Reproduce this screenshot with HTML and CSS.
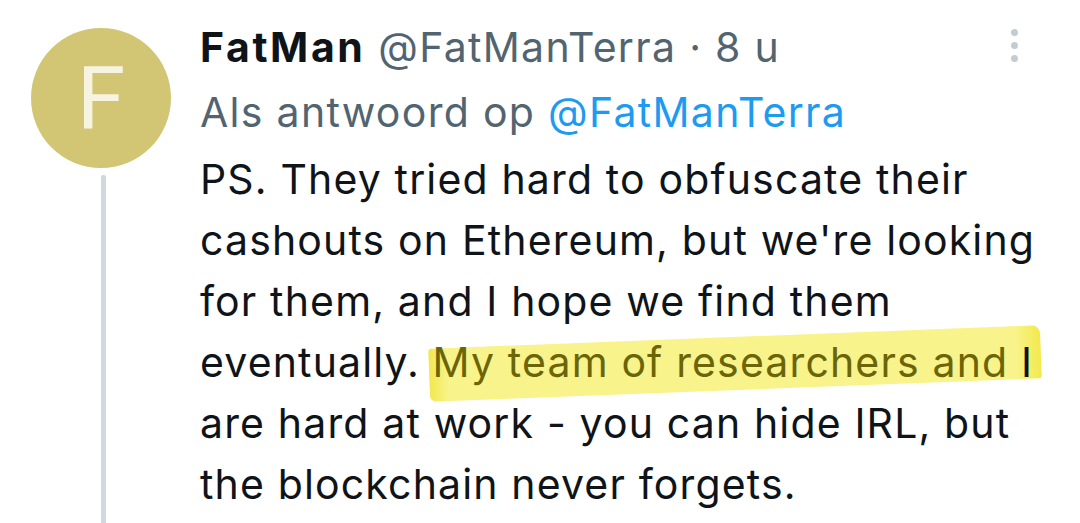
FILE: index.html
```html
<!DOCTYPE html>
<html>
<head>
<meta charset="utf-8">
<link rel="stylesheet" href="styles.css">
</head>
<body>
<div class="tweet">
  <div class="side">
    <div class="avatar">F</div>
    <div class="thread"></div>
  </div>
  <div class="main">
    <div class="head">
      <div class="meta">
        <div class="line1"><span class="name">FatMan</span> <span class="gray">@FatManTerra · 8 u</span></div>
        <div class="line2"><span class="gray">Als antwoord op</span> <span class="link">@FatManTerra</span></div>
      </div>
      <div class="more"><span></span><span></span><span></span></div>
    </div>
    <div class="body">PS. They tried hard to obfuscate their<br>cashouts on Ethereum, but we're looking<br>for them, and I hope we find them<br>eventually. <span class="mark">My team of researchers and</span> I<br>are hard at work - you can hide IRL, but<br>the blockchain never forgets.</div>
  </div>
</div>
</body>
</html>
```

FILE: styles.css
```css
html, body {
  margin: 0;
  padding: 0;
  background: #ffffff;
}
body {
  width: 1080px;
  height: 523px;
  overflow: hidden;
  font-family: Inter, Roboto, "Liberation Sans", sans-serif;
}
.tweet {
  display: flex;
  gap: 29px;
  padding-left: 31px;
  padding-right: 62px;
  height: 523px;
}
.side {
  width: 140px;
  flex: none;
  display: flex;
  flex-direction: column;
  align-items: center;
  padding-top: 28px;
}
.avatar {
  width: 140px;
  height: 140px;
  border-radius: 50%;
  background: #d2c674;
  color: #f6f3e0;
  font-family: Roboto, sans-serif;
  font-size: 88px;
  line-height: 140px;
  text-align: center;
  font-weight: 400;
}
.thread {
  width: 5px;
  flex: 1;
  margin-top: 7px;
  margin-left: 4px;
  background: #cfd9de;
  border-radius: 2px 2px 0 0;
}
.main {
  flex: 1;
  min-width: 0;
  display: flex;
  flex-direction: column;
  padding-top: 15px;
}
.head {
  display: flex;
  justify-content: space-between;
}
.meta {
  font-size: 41px;
  line-height: 65px;
  letter-spacing: 1.3px;
  white-space: nowrap;
}
.name {
  font-weight: 700;
  color: #0f1419;
  letter-spacing: 2.6px;
}
.gray {
  color: #536471;
}
.link {
  color: #1d9bf0;
}
.more {
  display: flex;
  flex-direction: column;
  gap: 6px;
  padding-top: 14px;
}
.more span {
  width: 7px;
  height: 7px;
  border-radius: 50%;
  background: #c2ccd3;
}
.body {
  position: relative;
  z-index: 0;
  margin-top: 4px;
  font-size: 41px;
  line-height: 61px;
  letter-spacing: 1.15px;
  color: #0f1419;
  white-space: nowrap;
}
.mark {
  position: relative;
  color: #6b6508;
}
.mark::before {
  content: "";
  position: absolute;
  left: -4px;
  right: -32px;
  top: 0;
  bottom: -3px;
  background: linear-gradient(to right, #f2e84e 0, #f8f38a 3%, #f8f38a 96%, #f3e94c 100%);
  transform: rotate(-2.2deg);
  border-radius: 3px 8px 3px 6px;
  z-index: -1;
}
```
